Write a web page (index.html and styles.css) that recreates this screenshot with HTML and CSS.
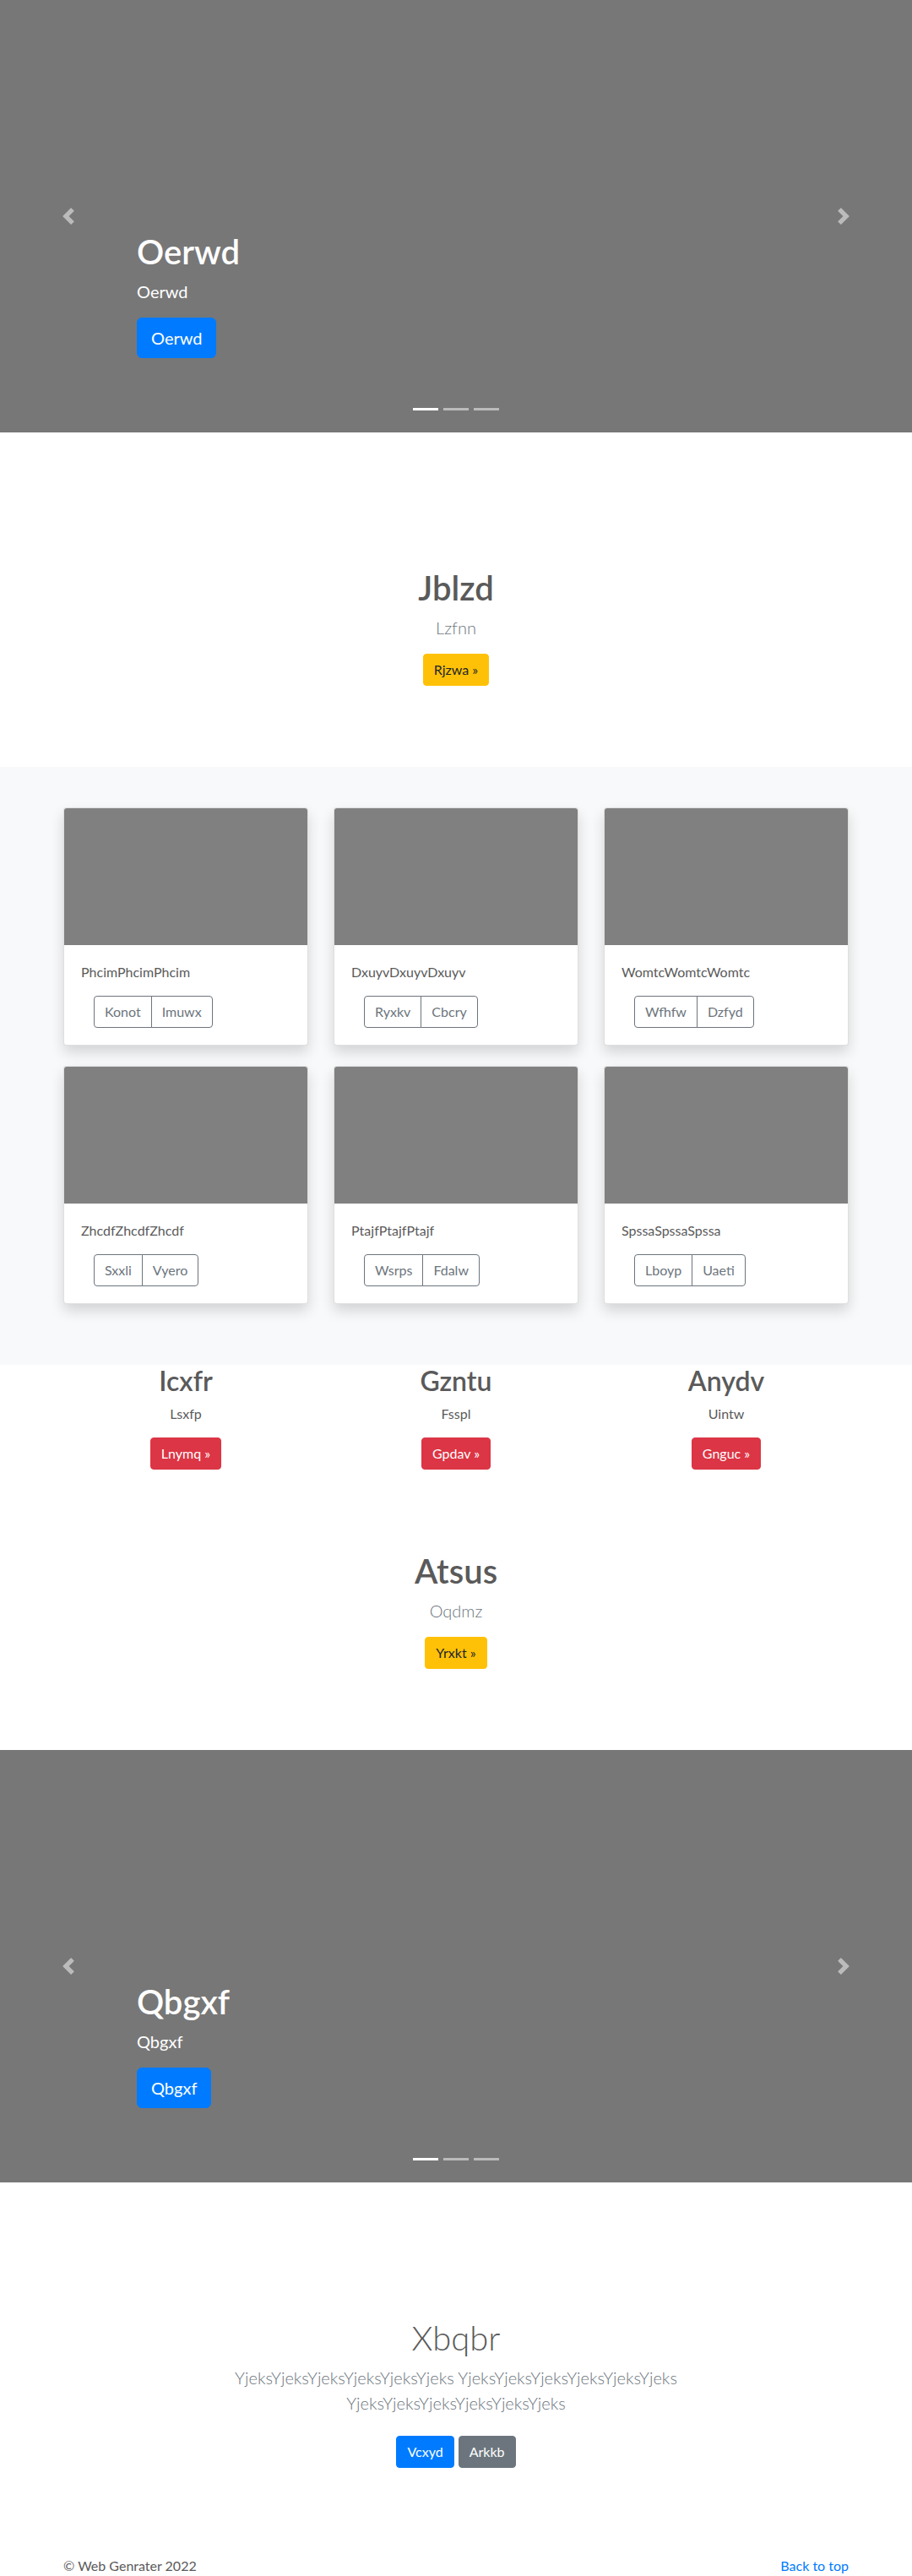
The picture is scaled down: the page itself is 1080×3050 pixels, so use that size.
FILE: index.html
```html
<!DOCTYPE html>
<html lang="en">
<head>
<meta charset="utf-8">
<title>Web Genrater</title>
<link rel="stylesheet" href="styles.css">
</head>
<body>

<div class="carousel">
  <div class="caption">
    <h1 class="cap-title">Oerwd</h1>
    <p class="cap-text">Oerwd</p>
    <p class="cap-action"><a class="btn btn-lg btn-primary" href="#">Oerwd</a></p>
  </div>
  <a class="ctrl ctrl-prev" href="#"><svg width="20" height="20" viewBox="0 0 8 8"><path fill="#fff" d="M5.25 0l-4 4 4 4 1.5-1.5-2.5-2.5 2.5-2.5-1.5-1.5z"/></svg></a>
  <a class="ctrl ctrl-next" href="#"><svg width="20" height="20" viewBox="0 0 8 8"><path fill="#fff" d="M2.75 0l-1.5 1.5 2.5 2.5-2.5 2.5 1.5 1.5 4-4-4-4z"/></svg></a>
  <ol class="indicators"><li class="active"></li><li></li><li></li></ol>
</div>

<section class="jumbo">
  <div class="jumbo-inner">
    <h1 class="title">Jblzd</h1>
    <p class="lead">Lzfnn</p>
    <p class="action"><a class="btn btn-warning" href="#">Rjzwa &raquo;</a></p>
  </div>
</section>

<section class="album">
  <div class="container">
    <div class="cards">
      <div class="card">
        <div class="thumb"></div>
        <div class="card-body">
          <p class="card-text">PhcimPhcimPhcim</p>
          <div class="btn-group"><a class="btn btn-outline" href="#">Konot</a><a class="btn btn-outline" href="#">Imuwx</a></div>
        </div>
      </div>
      <div class="card">
        <div class="thumb"></div>
        <div class="card-body">
          <p class="card-text">DxuyvDxuyvDxuyv</p>
          <div class="btn-group"><a class="btn btn-outline" href="#">Ryxkv</a><a class="btn btn-outline" href="#">Cbcry</a></div>
        </div>
      </div>
      <div class="card">
        <div class="thumb"></div>
        <div class="card-body">
          <p class="card-text">WomtcWomtcWomtc</p>
          <div class="btn-group"><a class="btn btn-outline" href="#">Wfhfw</a><a class="btn btn-outline" href="#">Dzfyd</a></div>
        </div>
      </div>
      <div class="card">
        <div class="thumb"></div>
        <div class="card-body">
          <p class="card-text">ZhcdfZhcdfZhcdf</p>
          <div class="btn-group"><a class="btn btn-outline" href="#">Sxxli</a><a class="btn btn-outline" href="#">Vyero</a></div>
        </div>
      </div>
      <div class="card">
        <div class="thumb"></div>
        <div class="card-body">
          <p class="card-text">PtajfPtajfPtajf</p>
          <div class="btn-group"><a class="btn btn-outline" href="#">Wsrps</a><a class="btn btn-outline" href="#">Fdalw</a></div>
        </div>
      </div>
      <div class="card">
        <div class="thumb"></div>
        <div class="card-body">
          <p class="card-text">SpssaSpssaSpssa</p>
          <div class="btn-group"><a class="btn btn-outline" href="#">Lboyp</a><a class="btn btn-outline" href="#">Uaeti</a></div>
        </div>
      </div>
    </div>
  </div>
</section>

<section class="marketing">
  <div class="container">
    <div class="cols">
      <div class="col">
        <h2 class="col-title">Icxfr</h2>
        <p class="col-text">Lsxfp</p>
        <p class="col-action"><a class="btn btn-danger" href="#">Lnymq &raquo;</a></p>
      </div>
      <div class="col">
        <h2 class="col-title">Gzntu</h2>
        <p class="col-text">Fsspl</p>
        <p class="col-action"><a class="btn btn-danger" href="#">Gpdav &raquo;</a></p>
      </div>
      <div class="col">
        <h2 class="col-title">Anydv</h2>
        <p class="col-text">Uintw</p>
        <p class="col-action"><a class="btn btn-danger" href="#">Gnguc &raquo;</a></p>
      </div>
    </div>
  </div>
</section>

<section class="jumbo jumbo-even">
  <div class="jumbo-inner">
    <h1 class="title">Atsus</h1>
    <p class="lead">Oqdmz</p>
    <p class="action"><a class="btn btn-warning" href="#">Yrxkt &raquo;</a></p>
  </div>
</section>

<div class="carousel">
  <div class="caption">
    <h1 class="cap-title">Qbgxf</h1>
    <p class="cap-text">Qbgxf</p>
    <p class="cap-action"><a class="btn btn-lg btn-primary" href="#">Qbgxf</a></p>
  </div>
  <a class="ctrl ctrl-prev" href="#"><svg width="20" height="20" viewBox="0 0 8 8"><path fill="#fff" d="M5.25 0l-4 4 4 4 1.5-1.5-2.5-2.5 2.5-2.5-1.5-1.5z"/></svg></a>
  <a class="ctrl ctrl-next" href="#"><svg width="20" height="20" viewBox="0 0 8 8"><path fill="#fff" d="M2.75 0l-1.5 1.5 2.5 2.5-2.5 2.5 1.5 1.5 4-4-4-4z"/></svg></a>
  <ol class="indicators"><li class="active"></li><li></li><li></li></ol>
</div>

<section class="jumbo">
  <div class="jumbo-inner">
    <h1 class="title title-light">Xbqbr</h1>
    <p class="lead">YjeksYjeksYjeksYjeksYjeksYjeks YjeksYjeksYjeksYjeksYjeksYjeks YjeksYjeksYjeksYjeksYjeksYjeks</p>
    <p class="btn-row"><a class="btn btn-primary" href="#">Vcxyd</a><a class="btn btn-secondary" href="#">Arkkb</a></p>
  </div>
</section>

<footer class="container footer">
  <p>&copy; Web Genrater 2022</p>
  <p><a class="top-link" href="#">Back to top</a></p>
</footer>

</body>
</html>
```

FILE: styles.css
```css
html, body {
  margin: 0;
  padding: 0;
}

body {
  font-family: Lato, "Segoe UI", "Open Sans", sans-serif;
  font-size: 16px;
  line-height: 1.5;
  color: #5a5a5a;
  background: #fff;
}

h1, h2, p {
  margin: 0;
}

.container {
  width: 960px;
  margin: 0 auto;
  padding: 0 15px;
  box-sizing: border-box;
}

/* Buttons */
.btn {
  display: inline-block;
  font-size: 16px;
  line-height: 24px;
  padding: 6px 12px;
  border: 1px solid transparent;
  border-radius: 4px;
  text-decoration: none;
  font-weight: 400;
  text-align: center;
  vertical-align: middle;
}

.btn-lg {
  font-size: 20px;
  line-height: 30px;
  padding: 8px 16px;
  border-radius: 6px;
}

.btn-primary {
  background: #007bff;
  border-color: #007bff;
  color: #fff;
}

.btn-secondary {
  background: #6c757d;
  border-color: #6c757d;
  color: #fff;
}

.btn-warning {
  background: #ffc107;
  border-color: #ffc107;
  color: #212529;
}

.btn-danger {
  background: #dc3545;
  border-color: #dc3545;
  color: #fff;
}

.btn-outline {
  background: transparent;
  border-color: #6c757d;
  color: #6c757d;
}

/* Carousel */
.carousel {
  position: relative;
  height: 512px;
  background: #777;
  overflow: hidden;
}

.caption {
  position: absolute;
  left: 15%;
  right: 15%;
  bottom: 52px;
  padding: 20px 0;
  color: #fff;
  text-align: left;
  z-index: 2;
}

.cap-title {
  font-size: 40px;
  line-height: 48px;
  font-weight: 600;
  margin-bottom: 8px;
}

.cap-text {
  font-size: 20px;
  line-height: 30px;
  margin-bottom: 16px;
}

.cap-action {
  margin-bottom: 16px;
}

.ctrl {
  position: absolute;
  top: 0;
  bottom: 0;
  width: 15%;
  display: flex;
  align-items: center;
  justify-content: center;
  opacity: 0.5;
  z-index: 1;
}

.ctrl-prev {
  left: 0;
}

.ctrl-next {
  right: 0;
}

.indicators {
  position: absolute;
  left: 15%;
  right: 15%;
  bottom: 0;
  margin: 0 0 16px;
  padding: 0;
  list-style: none;
  display: flex;
  justify-content: center;
  z-index: 3;
}

.indicators li {
  width: 30px;
  height: 3px;
  margin: 0 3px;
  border-top: 10px solid transparent;
  border-bottom: 10px solid transparent;
  background-color: #fff;
  background-clip: padding-box;
  opacity: 0.5;
}

.indicators li.active {
  opacity: 1;
}

/* Jumbotron-like sections */
.jumbo {
  text-align: center;
  padding: 160px 0 80px;
}

.jumbo-even {
  padding: 80px 0 80px;
}

.jumbo-inner {
  max-width: 640px;
  margin: 0 auto;
  padding: 0 15px;
  box-sizing: border-box;
}

.title {
  font-size: 40px;
  line-height: 48px;
  font-weight: 600;
  margin-bottom: 8px;
}

.title-light {
  font-weight: 300;
}

.lead {
  font-size: 20px;
  line-height: 30px;
  font-weight: 300;
  color: #6c757d;
  margin-bottom: 16px;
}

.action {
  margin-bottom: 16px;
}

.btn-row {
  display: flex;
  justify-content: center;
  gap: 5px;
  padding: 8px 0;
  margin-bottom: 16px;
}

/* Album */
.album {
  background: #f8f9fa;
  padding: 48px 0;
}

.cards {
  display: grid;
  grid-template-columns: repeat(3, 290px);
  column-gap: 30px;
  row-gap: 24px;
  margin-bottom: 24px;
}

.card {
  background: #fff;
  border: 1px solid rgba(0, 0, 0, 0.125);
  border-radius: 4px;
  box-shadow: 0 8px 16px rgba(0, 0, 0, 0.15);
  overflow: hidden;
}

.thumb {
  height: 162px;
  background: #808080;
}

.card-body {
  padding: 20px;
}

.card-text {
  margin-bottom: 16px;
}

.btn-group {
  display: inline-flex;
  margin-left: 15px;
}

.btn-group .btn:first-child {
  border-top-right-radius: 0;
  border-bottom-right-radius: 0;
}

.btn-group .btn + .btn {
  margin-left: -1px;
  border-top-left-radius: 0;
  border-bottom-left-radius: 0;
}

/* Marketing */
.cols {
  display: grid;
  grid-template-columns: repeat(3, 290px);
  column-gap: 30px;
}

.col {
  text-align: center;
}

.col-title {
  font-size: 32px;
  line-height: 38.4px;
  font-weight: 600;
  margin-bottom: 8px;
}

.col-text {
  margin-bottom: 16px;
}

.col-action {
  margin-bottom: 16px;
}

/* Footer */
.footer {
  display: flex;
  justify-content: space-between;
}

.footer p {
  margin-bottom: 16px;
}

.top-link {
  color: #007bff;
  text-decoration: none;
}
```
